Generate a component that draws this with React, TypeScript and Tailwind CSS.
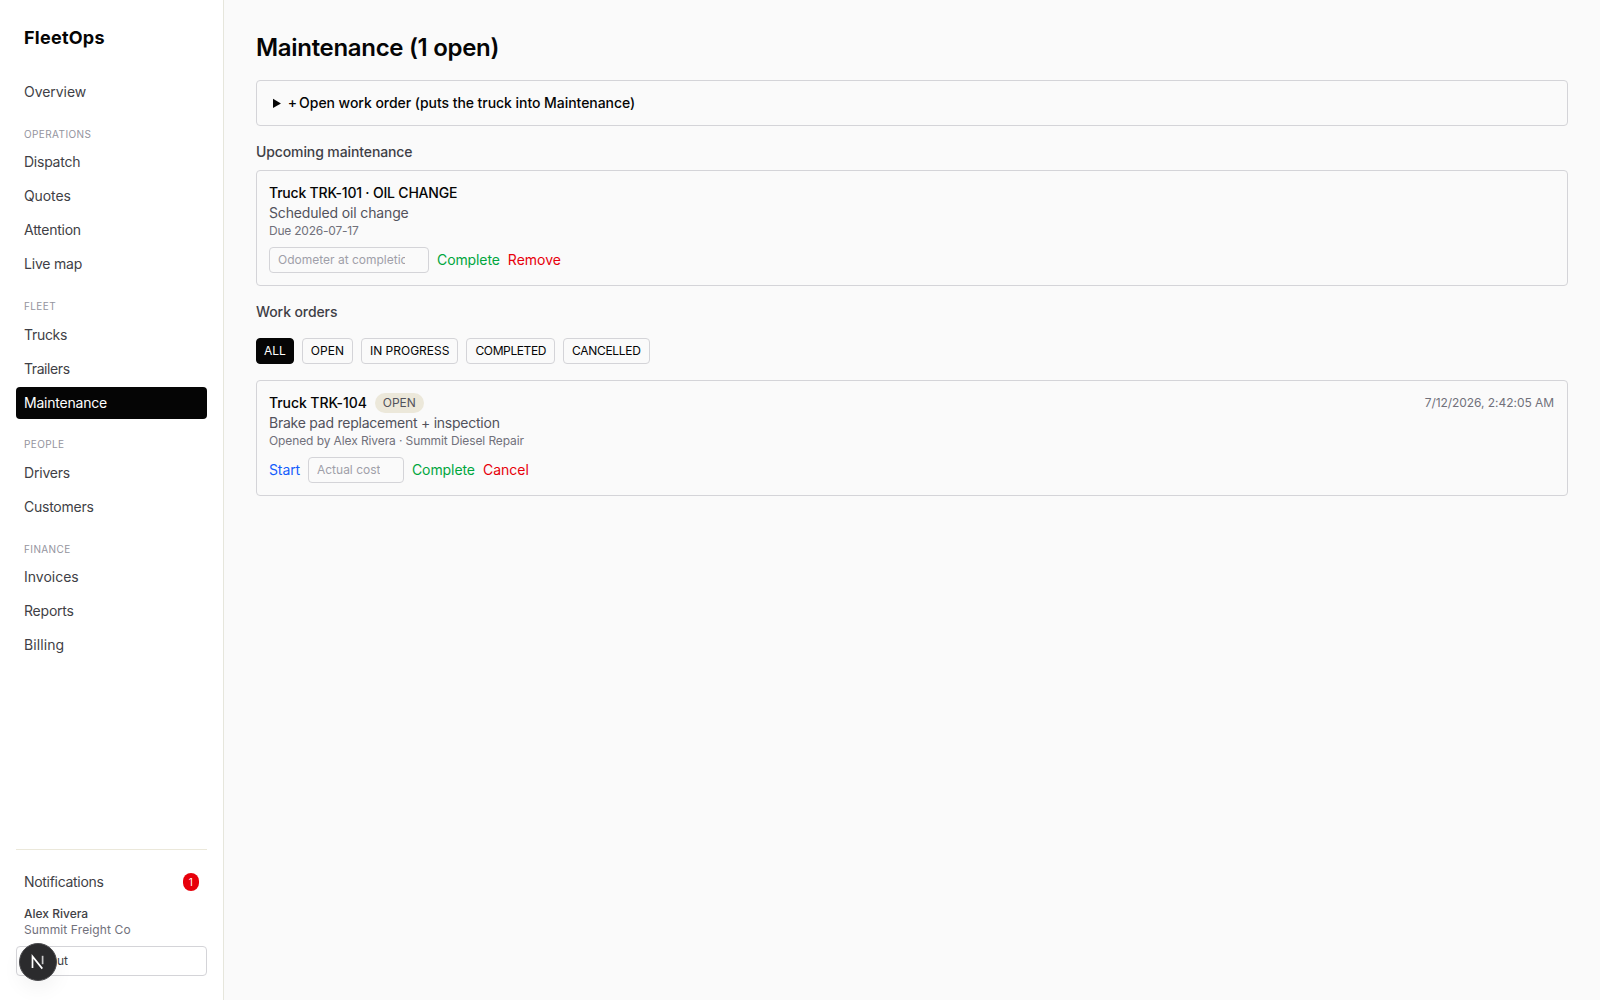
import React from "react";

const groups = [
  { label: "Operations", items: ["Dispatch", "Quotes", "Attention", "Live map"] },
  { label: "Fleet", items: ["Trucks", "Trailers", "Maintenance"] },
  { label: "People", items: ["Drivers", "Customers"] },
  { label: "Finance", items: ["Invoices", "Reports", "Billing"] },
];

const filters = [
  { label: "ALL", style: "px-[7px] bg-[#050505] border-[#050505] text-white" },
  { label: "OPEN", style: "px-2 border-[#d4d4d8]" },
  { label: "IN PROGRESS", style: "px-2 border-[#d4d4d8]" },
  { label: "COMPLETED", style: "px-2 border-[#d4d4d8] tracking-[-0.38px]" },
  { label: "CANCELLED", style: "px-2 border-[#d4d4d8] tracking-[-0.32px]" },
];

const navSpacing: Record<string, string> = {
  Overview: "tracking-[-0.05px]",
  Dispatch: "tracking-[-0.25px]",
  Quotes: "tracking-[-0.1px]",
  Attention: "tracking-[-0.25px]",
  "Live map": "tracking-[-0.2px]",
  Trucks: "tracking-[-0.3px]",
  Trailers: "tracking-[-0.42px]",
  Maintenance: "tracking-[-0.22px]",
  Drivers: "tracking-[-0.2px]",
  Customers: "tracking-[-0.25px]",
  Invoices: "tracking-normal",
  Reports: "tracking-[-0.22px]",
  Billing: "tracking-[0.1px]",
};

function NavItem({ label }: { label: string }) {
  const color = label === "Maintenance" ? "bg-[#050505] text-white" : "text-[#3f3f46]";
  return <a className={`block rounded px-2 py-1.5 text-sm ${color} ${navSpacing[label]}`}>{label}</a>;
}

function Sidebar() {
  return (
    <aside className="relative flex w-56 shrink-0 flex-col border-r border-[#e6e6dc] bg-white px-4 py-6">
      <div className="px-2 text-lg font-bold tracking-[0.25px]">FleetOps</div>
      <nav className="mt-6 flex flex-col gap-[17.83px]">
        <NavItem label="Overview" />
        {groups.map((g) => (
          <div key={g.label}>
            <div className="mb-1 px-2 text-[10px] leading-[16.5px] tracking-[0.4px] text-[#94949e] uppercase">{g.label}</div>
            <div className="flex flex-col gap-0.5">
              {g.items.map((i) => (
                <NavItem key={i} label={i} />
              ))}
            </div>
          </div>
        ))}
      </nav>
      <div className="mt-auto border-t border-[#ebe8da] pt-4">
        <div className="flex items-center justify-between px-2 py-1.5 text-sm tracking-[-0.3px] text-[#3f3f46]">
          Notifications
          <span className="w-[16.5px] rounded-full bg-[#e7000b] text-center text-[10px] leading-[18px] tracking-normal text-white">1</span>
        </div>
        <div className="mt-2 px-2 text-xs font-medium text-[#3f3f46]">Alex Rivera</div>
        <div className="px-2 text-xs tracking-[0.12px] text-[#71717b]">Summit Freight Co</div>
        <button className="mt-2 block w-full rounded border border-[#d4d4d8] px-2 py-1.5 text-left text-xs text-[#3f3f46]">
          Log out
        </button>
      </div>
      <div className="absolute bottom-[19px] left-[19px] flex size-[38px] items-center justify-center rounded-full border border-[#4b4b4e] bg-[#2b2b2d] shadow-[0_8px_20px_rgba(0,0,0,0.05)]">
        <svg width="16" height="16" viewBox="0 0 16 16" fill="none" stroke="white" strokeWidth="1.7">
          <path d="M2.5 14V2.4L12.3 14.6" />
          <path d="M12.6 1.8v8.4" strokeOpacity="0.75" />
        </svg>
      </div>
    </aside>
  );
}

export default function App() {
  return (
    <div className="flex h-screen bg-[#fafafa] font-[Inter,sans-serif] text-[#050505]">
      <Sidebar />
      <main className="flex-1 p-8">
        <h1 className="text-2xl font-semibold tracking-[-0.31px]">Maintenance (1 open)</h1>
        <details className="mt-4 rounded border border-[#d4d4d8] px-4 py-3">
          <summary className="text-sm font-medium tracking-[-0.05px]">
            <span className="tracking-[-0.9px]">+ </span>Open work order (puts the truck into Maintenance)
          </summary>
        </details>

        <h2 className="mt-4 text-sm font-medium tracking-[-0.11px] text-[#3f3f46]">Upcoming maintenance</h2>
        <div className="mt-2 rounded border border-[#d4d4d8] p-3 text-sm">
          <div className="font-medium tracking-[-0.2px]">Truck TRK-101 · OIL CHANGE</div>
          <div className="tracking-[-0.15px] text-[#52525c]">Scheduled oil change</div>
          <div className="text-xs tracking-[-0.22px] text-[#71717b]">Due 2026-07-17</div>
          <div className="mt-2 flex items-center gap-2">
            <input
              type="number"
              className="w-40 rounded border border-[#d4d4d8] px-2 py-1 text-xs placeholder:text-[#9f9fa9]"
              placeholder="Odometer at completion"
            />
            <button className="tracking-[-0.1px] text-[#00a63e]">Complete</button>
            <button className="text-[#e7000b]">Remove</button>
          </div>
        </div>

        <h2 className="mt-4 text-sm font-medium tracking-[-0.1px] text-[#3f3f46]">Work orders</h2>
        <div className="mt-4 flex gap-2 text-xs">
          {filters.map((f) => (
            <button key={f.label} className={`rounded border py-1 ${f.style}`}>
              {f.label}
            </button>
          ))}
        </div>
        <div className="mt-4 rounded border border-[#d4d4d8] p-3 text-sm">
          <div className="flex items-center justify-between">
            <div className="flex items-center gap-2">
              <span className="font-medium tracking-[-0.08px]">Truck TRK-104</span>
              <span className="rounded-full bg-[#ece8da] px-2 py-0.5 text-xs text-[#52525c]">OPEN</span>
            </div>
            <span className="mr-px text-xs tracking-[-0.05px] text-[#71717b]">7/12/2026, 2:42:05 AM</span>
          </div>
          <div className="tracking-[-0.24px] text-[#52525c]">Brake pad replacement + inspection</div>
          <div className="text-xs tracking-[-0.1px] text-[#71717b]">Opened by Alex Rivera · Summit Diesel Repair</div>
          <div className="mt-2 flex items-center gap-2">
            <button className="tracking-[-0.12px] text-[#155dfc]">Start</button>
            <input
              type="number"
              className="w-24 rounded border border-[#d4d4d8] px-2 py-1 text-xs placeholder:text-[#9f9fa9]"
              placeholder="Actual cost"
            />
            <button className="tracking-[-0.08px] text-[#00a63e]">Complete</button>
            <button className="text-[#e7000b]">Cancel</button>
          </div>
        </div>
      </main>
    </div>
  );
}
